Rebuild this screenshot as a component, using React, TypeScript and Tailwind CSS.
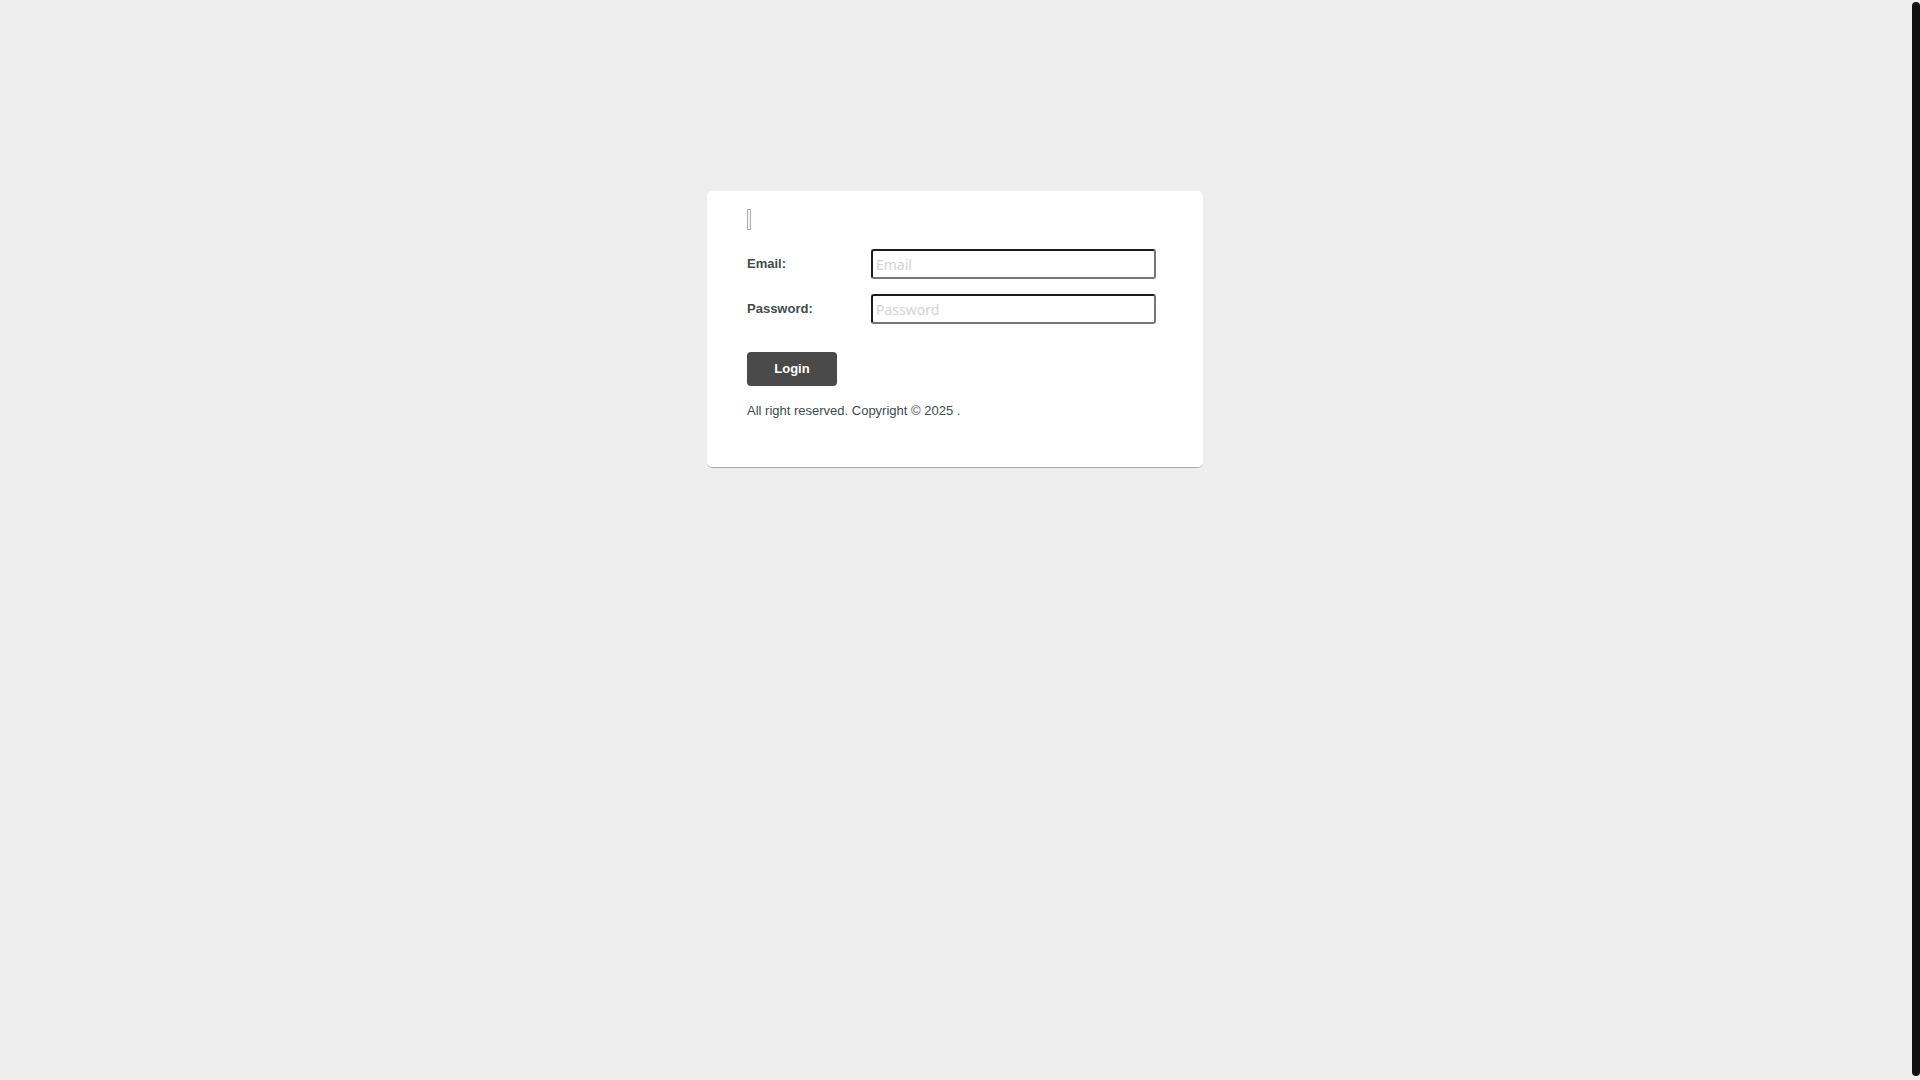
import React from "react";

export default function App() {
  return (
    <div
      className="h-screen flex bg-[#eeeeee] overflow-hidden"
      style={{ fontFamily: '"Liberation Sans", Arial, sans-serif' }}
    >
      <div className="flex-1 pt-[191px] flex justify-center items-start">
        <div className="w-[496px] bg-white rounded-[5px] border-b border-[#aaaaaa] px-[40px] pt-[18px] pb-[48px]">
          <span className="block w-[4px] h-[21px] border border-[#b0b0b0] bg-[#f4f4f4]" />
          <form onSubmit={(e) => e.preventDefault()}>
            <div className="mt-[19px] flex items-center">
              <label className="w-[124px] text-[13px] font-bold text-[#434b4b]">Email:</label>
              <input
                type="email"
                placeholder="Email"
                className="w-[285px] h-[30px] px-[3px] pt-[1px] rounded-[3px] border-2 border-t-[#1c1c1c] border-l-[#1c1c1c] border-b-[#767676] border-r-[#767676] text-[14px] outline-none placeholder:text-[#d4d4d4]"
                style={{ fontFamily: '"Noto Sans", sans-serif' }}
              />
            </div>
            <div className="mt-[15px] flex items-center">
              <label className="w-[124px] text-[13px] font-bold text-[#434b4b]">Password:</label>
              <input
                type="password"
                placeholder="Password"
                className="w-[285px] h-[30px] px-[3px] pt-[1px] rounded-[3px] border-2 border-t-[#1c1c1c] border-l-[#1c1c1c] border-b-[#767676] border-r-[#767676] text-[14px] outline-none placeholder:text-[#d4d4d4]"
                style={{ fontFamily: '"Noto Sans", sans-serif' }}
              />
            </div>
            <button
              type="submit"
              className="mt-[28px] block w-[90px] h-[34px] rounded-[4px] bg-[#4a4a4a] text-white text-[13px] font-bold"
            >
              Login
            </button>
          </form>
          <p className="mt-[17px] text-[13px] leading-[16px] text-[#434b4b]">
            All right reserved. Copyright © 2025 .
          </p>
        </div>
      </div>
      <div className="w-[10px] pl-[2px] pt-[2px] pb-[4px] flex">
        <div className="flex-1 rounded-[4px] bg-[#111111]" />
      </div>
    </div>
  );
}
